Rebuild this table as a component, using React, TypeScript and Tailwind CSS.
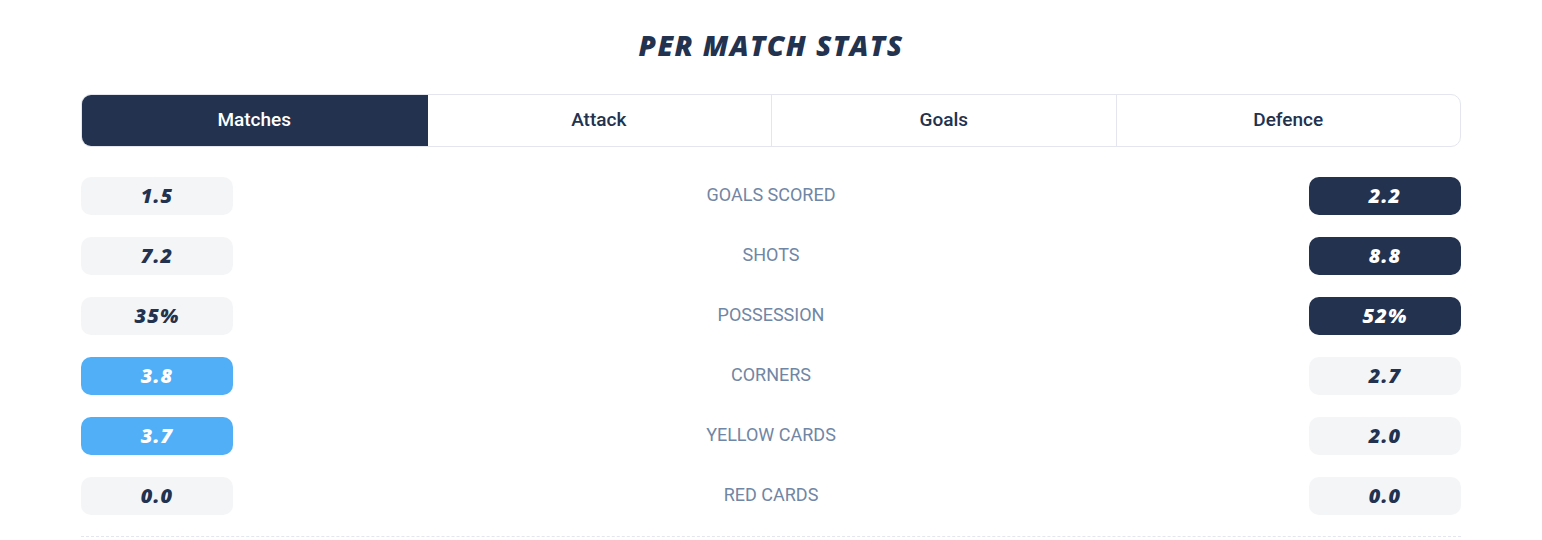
const tabs = ['Matches', 'Attack', 'Goals', 'Defence'];

type Tone = 'light' | 'dark' | 'blue';

interface Stat {
  label: string;
  home: string;
  away: string;
  homeTone: Tone;
  awayTone: Tone;
}

const stats: Stat[] = [
  { label: 'Goals scored', home: '1.5', away: '2.2', homeTone: 'light', awayTone: 'dark' },
  { label: 'Shots', home: '7.2', away: '8.8', homeTone: 'light', awayTone: 'dark' },
  { label: 'Possession', home: '35%', away: '52%', homeTone: 'light', awayTone: 'dark' },
  { label: 'Corners', home: '3.8', away: '2.7', homeTone: 'blue', awayTone: 'light' },
  { label: 'Yellow cards', home: '3.7', away: '2.0', homeTone: 'blue', awayTone: 'light' },
  { label: 'Red cards', home: '0.0', away: '0.0', homeTone: 'light', awayTone: 'light' },
];

const toneClass: Record<Tone, string> = {
  light: 'bg-[#f4f5f7] text-[#22324f]',
  dark: 'bg-[#22324f] text-white',
  blue: 'bg-[#51aff7] text-white',
};

const ValuePill = ({ value, tone }: { value: string; tone: Tone }) => (
  <div
    className={`w-[152px] h-[38px] rounded-[10px] flex items-center justify-center italic font-extrabold text-[20px] tracking-[0.05em] font-['Open_Sans',sans-serif] ${toneClass[tone]}`}
  >
    {value}
  </div>
);

const App = () => {
  return (
    <div className="w-full bg-white font-['Roboto',sans-serif]">
      <div className="w-[1380px] mx-auto pt-[25px]">
        {/* Title */}
        <h2 className="text-center italic font-extrabold text-[28px] leading-[40px] tracking-[0.05em] text-[#22324f] font-['Open_Sans',sans-serif]">
          PER MATCH STATS
        </h2>

        {/* Tabs */}
        <div className="mt-[29px] grid grid-cols-4 h-[53px] rounded-[10px] border border-[#e3e6ee] overflow-hidden">
          {tabs.map((tab, i) => (
            <div
              key={tab}
              className={`flex items-center justify-center text-[19px] font-medium ${
                i === 0
                  ? 'bg-[#22324f] text-white -m-px'
                  : 'text-[#22324f] border-l border-[#e3e6ee]'
              } ${i === 1 ? 'border-l-0' : ''}`}
            >
              {tab}
            </div>
          ))}
        </div>

        {/* Stats rows */}
        <div className="mt-[30px] flex flex-col gap-[22px]">
          {stats.map((s) => (
            <div key={s.label} className="flex items-center justify-between">
              <ValuePill value={s.home} tone={s.homeTone} />
              <span className="uppercase text-[18px] leading-[24px] pb-[2px] text-[#7186a4]">{s.label}</span>
              <ValuePill value={s.away} tone={s.awayTone} />
            </div>
          ))}
        </div>

        <div className="mt-[21px] border-t border-dashed border-[#e3e6ee] h-[4px]" />
      </div>
    </div>
  );
};

export default App;
